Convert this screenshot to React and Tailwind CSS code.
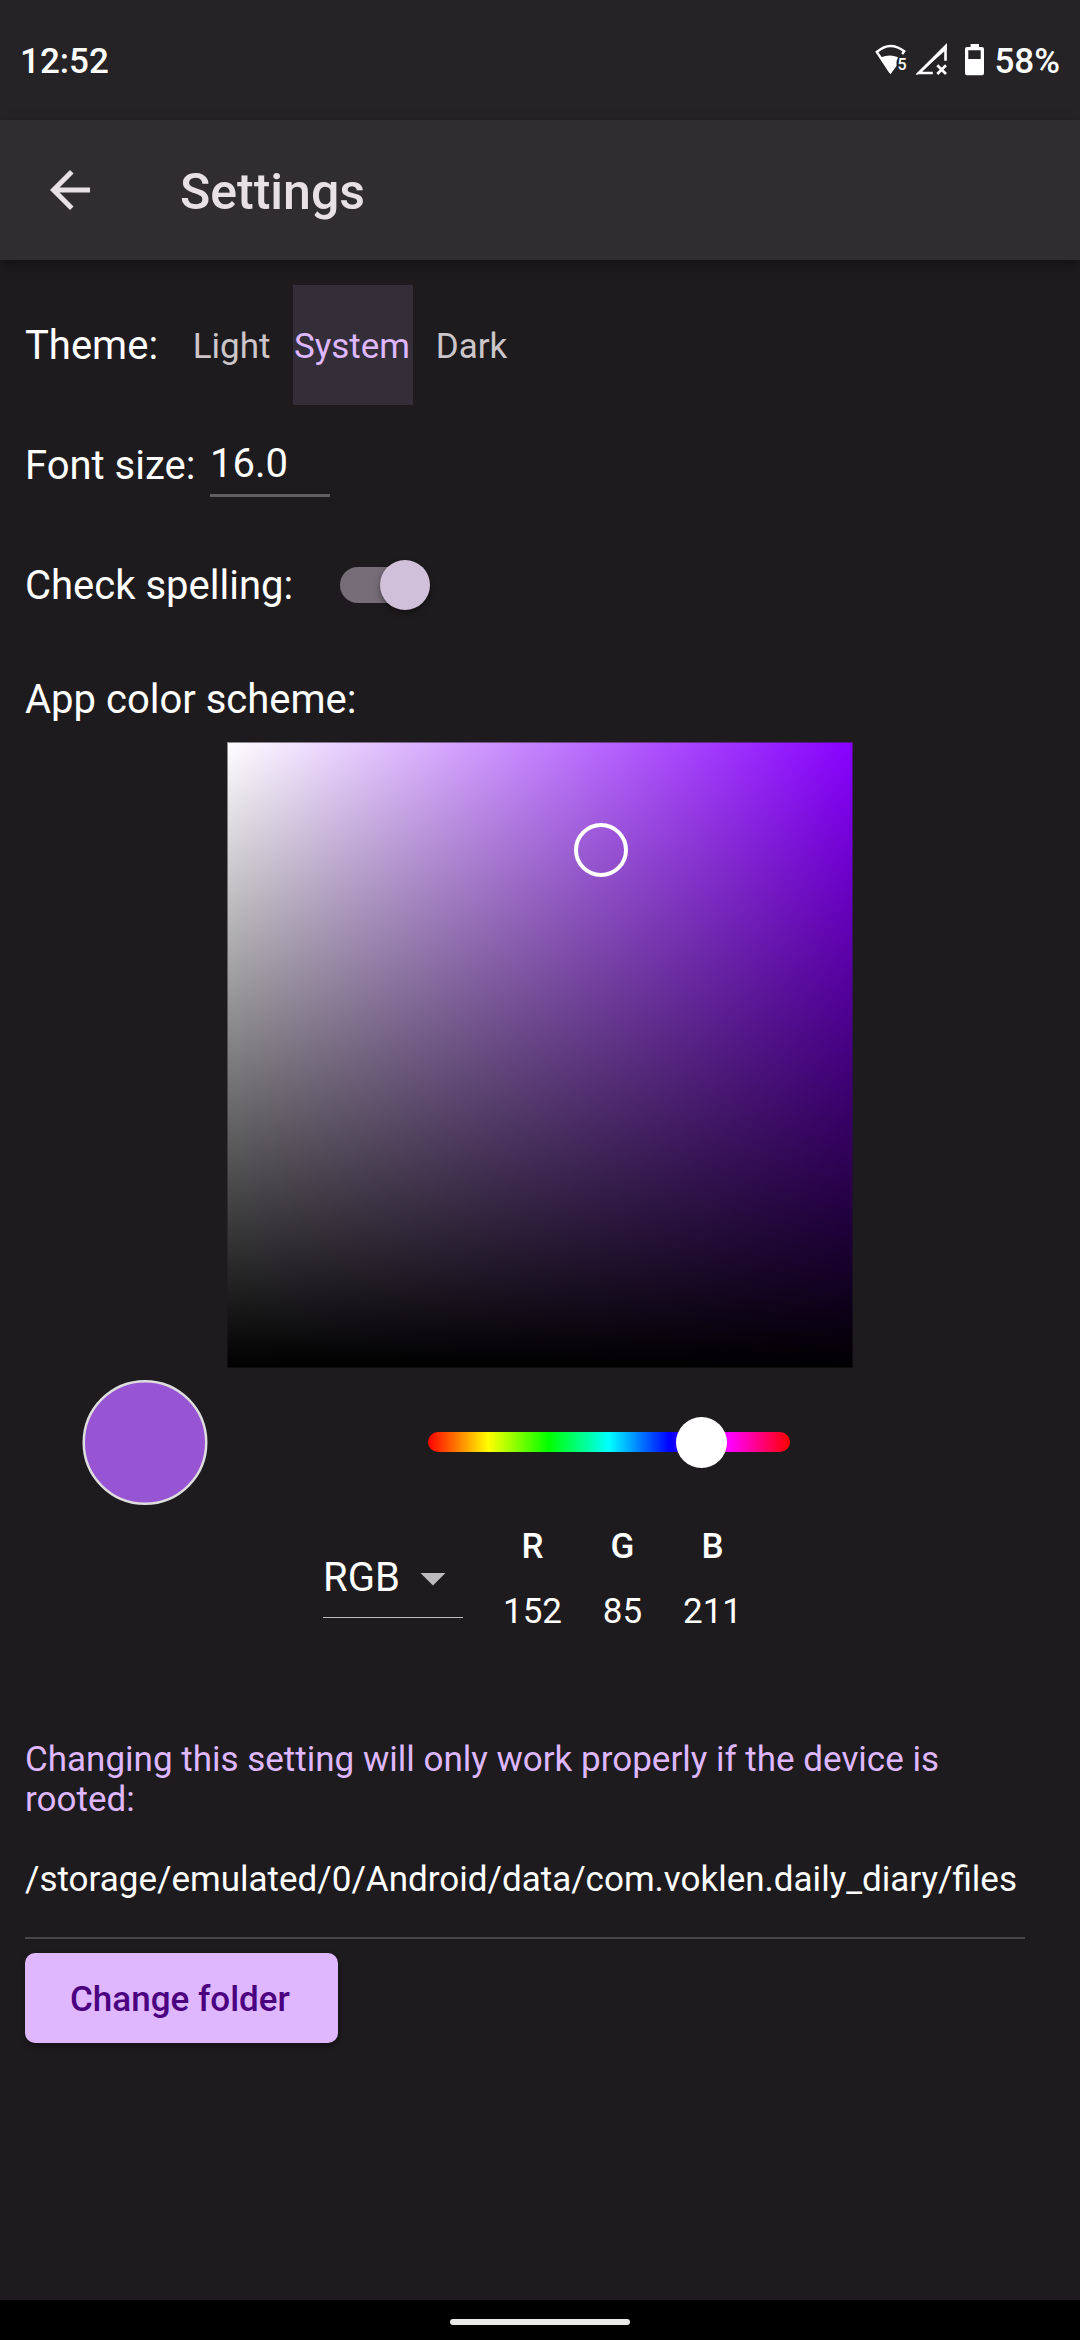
import React from "react";

function StatusIcons() {
  return (
    <svg className="mt-[38px] h-[40px] w-[120px]" viewBox="0 0 120 40" fill="none">
      {/* wifi */}
      <path d="M20.5 34.5L6.8 14Q20 2.2 34.2 13.2L32.2 16" stroke="#fff" strokeWidth="2.4" />
      <path d="M10.5 19.6Q19.5 15.8 28 19.2L26.5 23.5V28L20.5 36.2Z" fill="#fff" />
      <text x="27.6" y="32.4" fill="#fff" fontFamily="Roboto, sans-serif" fontWeight="500" fontSize="16">5</text>
      {/* mobile signal */}
      <path d="M75.5 22.8V9L49 35H62.8" stroke="#fff" strokeWidth="2.6" />
      <path d="M77 5V11L48 36.4H45.6Z" fill="#fff" />
      <path d="M67.3 27.3L76 36M76 27.3L67.3 36" stroke="#fff" strokeWidth="2.7" />
      {/* battery */}
      <path
        fillRule="evenodd"
        fill="#fff"
        d="M100.6 6H109V9H112a2 2 0 0 1 2 2V35.3a2 2 0 0 1-2 2H97a2 2 0 0 1-2-2V11a2 2 0 0 1 2-2H100.6ZM98.3 12.3V21H110.7V12.3Z"
      />
    </svg>
  );
}

function ThemeOption({ label, selected }) {
  return (
    <button
      className={
        selected
          ? "flex h-[120px] w-[120px] justify-center bg-[#342e39] pt-[41px] pr-px text-[35px] leading-[41px] text-[#deb7ff]"
          : "flex h-[120px] w-[120px] justify-center pt-[41px] pr-0.5 text-[35px] leading-[41px] text-[#ccc6ca]"
      }
    >
      {label}
    </button>
  );
}

function Channel({ name, value }) {
  return (
    <div className="flex w-[90px] flex-col items-center gap-6 pt-[21px] text-[35px] leading-[41px]">
      <span className="font-medium">{name}</span>
      <span>{value}</span>
    </div>
  );
}

export default function App() {
  return (
    <div className="flex h-[2340px] w-[1080px] flex-col overflow-hidden bg-[#1e1b1e] font-['Roboto',sans-serif] text-white">
      <div className="flex h-[120px] shrink-0 justify-between bg-[#252326] px-5 text-[35px] leading-[41px] font-medium">
        <span className="pt-[41px]">12:52</span>
        <div className="flex gap-1">
          <StatusIcons />
          <span className="pt-[41px]">58%</span>
        </div>
      </div>

      <header className="flex h-[140px] shrink-0 bg-[#302d30] pl-10 text-[#e7e1e5] shadow-[0_5px_12px_rgba(0,0,0,0.35)]">
        <svg className="mt-10 h-[60px] w-[60px]" viewBox="0 0 24 24" fill="currentColor">
          <path d="M20 11H7.83l5.59-5.59L12 4l-8 8 8 8 1.41-1.41L7.83 13H20v-2z" />
        </svg>
        <h1 className="mt-[43px] ml-20 text-[50px] leading-[58px] font-medium">Settings</h1>
      </header>

      <main className="flex-1 pt-[25px] pl-[25px] text-[40px] leading-[47px]">
        <div className="flex h-[120px]">
          <span className="w-[147.5px] pt-[37px]">Theme:</span>
          <ThemeOption label="Light" />
          <ThemeOption label="System" selected />
          <ThemeOption label="Dark" />
        </div>

        <div className="flex h-[120px]">
          <span className="w-[185px] pt-[37px]">Font size:</span>
          <div className="mt-[35px] h-[57px] w-[120px] border-b-3 border-[#625f62]">16.0</div>
        </div>

        <div className="flex h-[120px]">
          <span className="w-[315px] pt-[37px]">Check spelling:</span>
          <div className="mt-[42px] flex h-[36px] w-[88px] items-center justify-end rounded-full bg-[#766d79]">
            <div className="-mr-[2px] h-[50px] w-[50px] shrink-0 rounded-full bg-[#d1c0d9] shadow-[0_3px_6px_rgba(0,0,0,0.4)]" />
          </div>
        </div>

        <div className="h-[97px] pt-[31px]">App color scheme:</div>

        <div className="relative ml-[202px] h-[626px] w-[626px] bg-[linear-gradient(to_top,#000,transparent),linear-gradient(to_right,#fff,#8800ff)]">
          <div className="absolute inset-0 border border-[#1e1b1e]/50" />
          <div className="absolute top-[81px] left-[347px] h-[54px] w-[54px] rounded-full border-4 border-white" />
        </div>

        <div className="mt-3 flex h-[125px]">
          <svg className="ml-[57px] h-[126px] w-[126px]" viewBox="0 0 126 126">
            <circle cx="63" cy="62.5" r="61.25" fill="#9855d3" stroke="#dedede" strokeWidth="2.5" />
          </svg>
          <div className="relative mt-[52px] ml-[220px] h-5 w-[362px] rounded-full bg-[linear-gradient(to_right,#f00,#ff0,#0f0,#0ff,#00f,#f0f,#f00)]">
            <div className="absolute -top-[15px] left-[248px] h-[51px] w-[51px] rounded-full bg-white" />
          </div>
        </div>

        <div className="flex h-[187px] pl-[298px]">
          <div className="mt-[49px] flex h-[64px] w-[140px] justify-between border-b border-[#bcbabc]">
            <span>RGB</span>
            <svg className="mt-[18px] mr-[17px] h-[14px] w-[26px]" viewBox="0 0 26 14">
              <path d="M.5 1H25.5L13 13.5Z" fill="#bdbbbd" />
            </svg>
          </div>
          <div className="ml-[24.5px] flex">
            <Channel name="R" value="152" />
            <Channel name="G" value="85" />
            <Channel name="B" value="211" />
          </div>
        </div>

        <p className="mt-[48px] w-[1000px] text-[35px] leading-[40px] text-[#deb7ff]">
          Changing this setting will only work properly if the device is rooted:
        </p>
        <div className="mt-[39px] h-[80px] w-[1000px] border-b-2 border-[#49474a] text-[35px] leading-[41px]">
          /storage/emulated/0/Android/data/com.voklen.daily_diary/files
        </div>
        <button className="mt-[14px] flex h-[90px] w-[312.5px] rounded-[10px] bg-[#deb7ff] pt-[26px] pl-[45px] text-[35px] leading-[41px] font-medium whitespace-nowrap text-[#4a007f] shadow-[0_3px_6px_rgba(0,0,0,0.4)]">
          Change folder
        </button>
      </main>

      <div className="flex h-10 shrink-0 justify-center bg-black pt-[19px]">
        <div className="h-[6px] w-[180px] rounded-full bg-[#e9e9e7]" />
      </div>
    </div>
  );
}
